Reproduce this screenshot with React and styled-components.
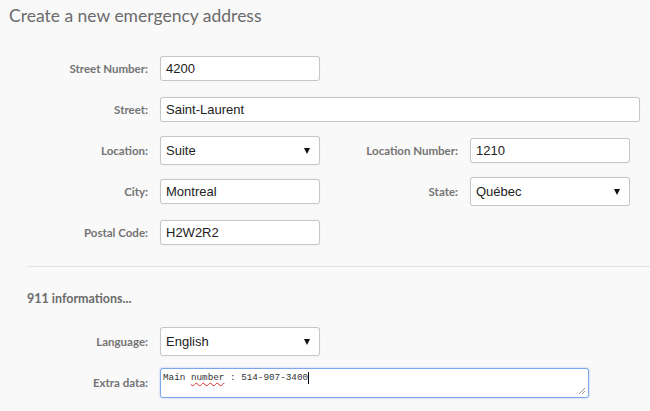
import React from 'react'
import styled, { createGlobalStyle } from 'styled-components'

const Global = createGlobalStyle`
  body {
    margin: 0;
    background: #f9f9f9;
    font-family: Lato, "Open Sans", sans-serif;
  }
`

const Page = styled.div`
  width: 650px;
  height: 411px;
  overflow: hidden;
  background: #f9f9f9;
`

const Title = styled.h1`
  margin: 0;
  padding: 5px 0 0 9px;
  height: 48px;
  box-sizing: border-box;
  font-size: 17.5px;
  font-weight: 400;
  color: #6b6b6b;
`

const Form = styled.div`
  display: grid;
  grid-template-columns: 148px 160px 126px 160px;
  grid-auto-rows: 41px;
  column-gap: 12px;
  align-items: center;
`

const Label = styled.label`
  text-align: right;
  font-size: 11.5px;
  font-weight: 700;
  color: #747474;
`

const Field = styled.div`
  box-sizing: border-box;
  height: ${p => (p.$tall ? 29 : 25)}px;
  width: ${p => p.$width || 160}px;
  grid-column: ${p => p.$span || 'auto'};
  background: #fff;
  border: 1px solid #c6c6c6;
  border-radius: 3px;
  box-shadow: 0 0 1px rgba(0, 0, 0, 0.12);
  display: flex;
  align-items: center;
  justify-content: space-between;
  padding: 0 9px 0 5px;
  font-family: "Liberation Sans", Arial, sans-serif;
  font-size: 13px;
  color: #222;
`

const Arrow = styled.span`
  width: 0;
  height: 0;
  border-left: 3.5px solid transparent;
  border-right: 3.5px solid transparent;
  border-top: 6px solid #111;
`

const Divider = styled.hr`
  margin: 13px 0 0 27px;
  border: 0;
  border-top: 1px solid #e4e4e4;
`

const Section = styled.h2`
  margin: 0;
  padding: 24px 0 0 27px;
  height: 54px;
  box-sizing: border-box;
  font-size: 12.5px;
  font-weight: 700;
  color: #6b6b6b;
`

const Notes = styled.div`
  position: relative;
  box-sizing: border-box;
  grid-column: 2 / span 3;
  width: 429px;
  height: 30px;
  background: #fff;
  border: 1px solid #7da6ea;
  box-shadow: 0 0 2px rgba(90, 140, 230, 0.6);
  border-radius: 3px;
  padding: 3px 2px;
  font-family: "Liberation Mono", "Courier New", monospace;
  font-size: 9.3px;
  color: #333;
  line-height: 12px;
`

const Misspelt = styled.span`
  text-decoration: underline wavy #e03030;
  text-decoration-thickness: 1px;
  text-underline-offset: 2px;
`

const Caret = styled.span`
  display: inline-block;
  width: 1px;
  height: 12px;
  background: #000;
  vertical-align: top;
`

const Grip = styled.svg`
  position: absolute;
  right: 2px;
  bottom: 2px;
`

const Select = ({ value, width, span }) => (
  <Field $tall $width={width} $span={span}>
    {value}
    <Arrow />
  </Field>
)

export default function App() {
  return (
    <Page>
      <Global />
      <Title>Create a new emergency address</Title>
      <Form>
        <Label>Street Number:</Label>
        <Field>4200</Field>
        <span />
        <span />

        <Label>Street:</Label>
        <Field $span="2 / span 3" $width={480}>Saint-Laurent</Field>

        <Label>Location:</Label>
        <Select value="Suite" />
        <Label>Location Number:</Label>
        <Field>1210</Field>

        <Label>City:</Label>
        <Field>Montreal</Field>
        <Label>State:</Label>
        <Select value="Québec" />

        <Label>Postal Code:</Label>
        <Field>H2W2R2</Field>
      </Form>
      <Divider />
      <Section>911 informations...</Section>
      <Form>
        <Label>Language:</Label>
        <Select value="English" />
        <span />
        <span />

        <Label>Extra data:</Label>
        <Notes>
          Main <Misspelt>number</Misspelt> : 514-907-3400<Caret />
          <Grip width="8" height="8" viewBox="0 0 8 8">
            <path d="M7 1 L1 7 M7 4 L4 7" stroke="#999" strokeWidth="1" />
          </Grip>
        </Notes>
      </Form>
    </Page>
  )
}
